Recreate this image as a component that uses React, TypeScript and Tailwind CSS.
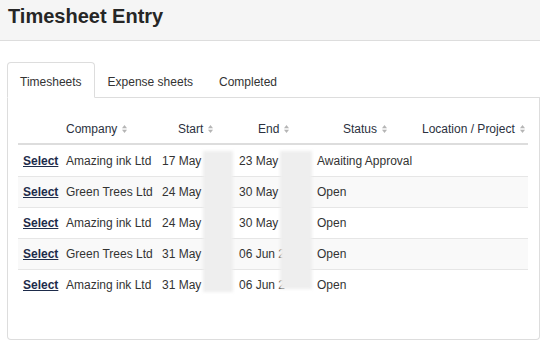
import React from "react";

const SortIcon = () => (
  <svg width="5" height="8" viewBox="0 0 5 8" className="ml-[5px] inline-block">
    <path d="M0 3.3 L2.5 0 L5 3.3 Z" fill="#b5b5b5" />
    <path d="M0 4.7 L5 4.7 L2.5 8 Z" fill="#b5b5b5" />
  </svg>
);

const rows = [
  { company: "Amazing ink Ltd", start: "17 May", end: "23 May", status: "Awaiting Approval" },
  { company: "Green Trees Ltd", start: "24 May", end: "30 May", status: "Open" },
  { company: "Amazing ink Ltd", start: "24 May", end: "30 May", status: "Open" },
  { company: "Green Trees Ltd", start: "31 May", end: "06 Jun 2", status: "Open" },
  { company: "Amazing ink Ltd", start: "31 May", end: "06 Jun 2", status: "Open" },
];

const cols = "grid grid-cols-[43px_96px_77px_78px_105px_111px]";

export default function App() {
  return (
    <div
      className="w-[540px] h-[348px] bg-white overflow-hidden text-[12px] text-[#333]"
      style={{ fontFamily: '"Liberation Sans", Arial, sans-serif' }}
    >
      <div className="h-[41px] bg-[#f5f5f5] border-b border-[#dddddd] pl-[8px] pt-[4px]">
        <h1 className="text-[20px] font-bold leading-[24px] text-[#262626]">Timesheet Entry</h1>
      </div>
      <div className="pl-[7px] pt-[21px]">
        <div className="w-[533px]">
          <div className="flex h-[36px] border-b border-[#dddddd]">
            <div className="h-[36px] -mb-px px-[12px] pt-[10px] border border-[#dddddd] border-b-white bg-white rounded-t-[4px] text-[#333]">
              Timesheets
            </div>
            <div className="h-[35px] px-[13px] pt-[11px] text-[#333]">Expense sheets</div>
            <div className="h-[35px] px-[13px] pt-[11px] text-[#333]">Completed</div>
          </div>
          <div className="h-[242px] border-l border-r border-b border-[#dddddd] rounded-b-[4px] pl-[10px] pt-[14px]">
            <div className="relative w-[510px]">
              <div className={`${cols} h-[33px] pt-[3px] border-b-2 border-[#dddddd] items-center text-[#2b3140]`}>
                <div />
                <div className="pl-[5px] flex items-center">Company<SortIcon /></div>
                <div className="pl-[21px] flex items-center">Start<SortIcon /></div>
                <div className="pl-[24px] flex items-center">End<SortIcon /></div>
                <div className="pl-[31px] flex items-center">Status<SortIcon /></div>
                <div className="pl-[5px] flex items-center">Location / Project<SortIcon /></div>
              </div>
              {rows.map((r, i) => (
                <div
                  key={i}
                  className={`${cols} h-[31px] items-center ${i > 0 ? "border-t border-[#e6e6e6]" : ""} ${
                    i % 2 === 1 ? "bg-[#f9f9f9]" : "bg-white"
                  }`}
                >
                  <div className="pl-[5px]">
                    <a className="font-bold underline text-[#1d2b4a] cursor-pointer">Select</a>
                  </div>
                  <div className="pl-[5px] whitespace-nowrap">{r.company}</div>
                  <div className="pl-[5px] whitespace-nowrap">{r.start}</div>
                  <div className="pl-[5px] whitespace-nowrap overflow-hidden">{r.end}</div>
                  <div className="pl-[5px] whitespace-nowrap">{r.status}</div>
                  <div />
                </div>
              ))}
              <div className="absolute left-[185px] top-[39px] w-[30px] h-[141px] bg-[#eeeeee] blur-[1.5px]" />
              <div className="absolute left-[262px] top-[39px] w-[32px] h-[138px] bg-[#eeeeee] blur-[1.5px]" />
            </div>
          </div>
        </div>
      </div>
    </div>
  );
}
